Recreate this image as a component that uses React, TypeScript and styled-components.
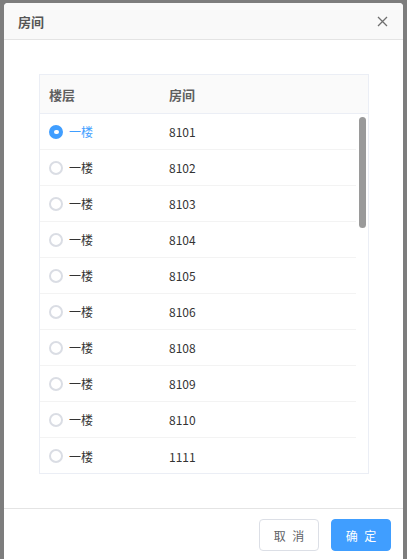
import styled, { createGlobalStyle } from "styled-components";

const rooms = ["8101", "8102", "8103", "8104", "8105", "8106", "8108", "8109", "8110", "1111"];

const GlobalStyle = createGlobalStyle`
  html, body {
    margin: 0;
    padding: 0;
    background: #7d7d7d;
    font-family: "Noto Sans CJK SC", "Noto Sans", sans-serif;
  }
`;

const App = () => {
  const selected = 0;

  return (
    <>
      <GlobalStyle />
      <S.Backdrop>
        <S.Dialog>
          <S.Header>
            <S.Title>房间</S.Title>
            <S.Close aria-label="close">
              <svg width="11" height="11" viewBox="0 0 11 11">
                <path d="M1 1 L10 10 M10 1 L1 10" stroke="#6f6f6f" strokeWidth="1.3" fill="none" />
              </svg>
            </S.Close>
          </S.Header>

          <S.Body>
            <S.Table>
              <S.HeadRow>
                <S.HeadCell>楼层</S.HeadCell>
                <S.HeadCell>房间</S.HeadCell>
              </S.HeadRow>
              <S.BodyWrap>
                <S.Rows>
                  {rooms.map((room, i) => (
                    <S.Row key={room}>
                      <S.Cell>
                        <S.Radio $checked={i === selected} />
                        <S.Floor $checked={i === selected}>一楼</S.Floor>
                      </S.Cell>
                      <S.Cell>{room}</S.Cell>
                    </S.Row>
                  ))}
                </S.Rows>
                <S.Gutter>
                  <S.Thumb />
                </S.Gutter>
              </S.BodyWrap>
            </S.Table>
          </S.Body>

          <S.Footer>
            <S.Button>取 消</S.Button>
            <S.Button $primary>确 定</S.Button>
          </S.Footer>
        </S.Dialog>
      </S.Backdrop>
    </>
  );
};

export default App;

const S = {
  Backdrop: styled.div`
    width: 407px;
    height: 559px;
    padding: 3px 4px 0 4px;
    box-sizing: border-box;
    overflow: hidden;
    background: #7d7d7d;
  `,

  Dialog: styled.div`
    width: 399px;
    height: 556px;
    background: #ffffff;
    border-radius: 4px 4px 0 0;
    display: flex;
    flex-direction: column;
    overflow: hidden;
  `,

  Header: styled.div`
    height: 36px;
    flex: 0 0 36px;
    display: flex;
    align-items: center;
    justify-content: space-between;
    padding: 0 15px 0 14px;
    background: #f9f9f9;
    border-bottom: 1px solid #e4e4e4;
  `,

  Title: styled.div`
    font-size: 13px;
    font-weight: 700;
    color: #555555;
  `,

  Close: styled.button`
    border: none;
    background: transparent;
    padding: 0;
    width: 11px;
    height: 11px;
    display: flex;
    cursor: pointer;
  `,

  Body: styled.div`
    flex: 0 0 auto;
    padding: 34px 34px 34px 35px;
    border-bottom: 1px solid #e4e4e4;
  `,

  Table: styled.div`
    border: 1px solid #ebeef5;
    height: 400px;
    box-sizing: border-box;
    display: flex;
    flex-direction: column;
  `,

  HeadRow: styled.div`
    display: grid;
    grid-template-columns: 120px 1fr;
    height: 38px;
    flex: 0 0 38px;
    background: #fafafa;
    border-bottom: 1px solid #ebeef5;
  `,

  HeadCell: styled.div`
    display: flex;
    align-items: center;
    padding-left: 9px;
    font-size: 13px;
    font-weight: 700;
    color: #5f5f5f;
  `,

  BodyWrap: styled.div`
    flex: 1;
    display: flex;
    overflow: hidden;
  `,

  Rows: styled.div`
    flex: 1;
    display: flex;
    flex-direction: column;
  `,

  Row: styled.div`
    display: grid;
    grid-template-columns: 120px 1fr;
    height: 36px;
    flex: 0 0 36px;
    box-sizing: border-box;
    border-bottom: 1px solid #f3f3f3;

    &:last-child {
      border-bottom: none;
    }
  `,

  Cell: styled.div`
    display: flex;
    align-items: center;
    padding-left: 9px;
    font-size: 12px;
    color: #333333;
  `,

  Radio: styled.span<{ $checked?: boolean }>`
    width: 14px;
    height: 14px;
    box-sizing: border-box;
    border-radius: 50%;
    margin-right: 6px;
    border: 2px solid ${(p) => (p.$checked ? "#409eff" : "#dadde4")};
    background: ${(p) => (p.$checked ? "#409eff" : "#ffffff")};
    display: flex;
    align-items: center;
    justify-content: center;

    &::after {
      content: "";
      width: 5px;
      height: 4px;
      border-radius: 2px;
      background: #ffffff;
      display: ${(p) => (p.$checked ? "block" : "none")};
    }
  `,

  Floor: styled.span<{ $checked?: boolean }>`
    color: ${(p) => (p.$checked ? "#409eff" : "#333333")};
  `,

  Gutter: styled.div`
    width: 12px;
    flex: 0 0 12px;
    padding: 3px 2px 0 3px;
    box-sizing: border-box;
  `,

  Thumb: styled.div`
    width: 7px;
    height: 111px;
    border-radius: 4px;
    background: #9a9a9a;
  `,

  Footer: styled.div`
    flex: 0 0 auto;
    display: flex;
    justify-content: flex-end;
    gap: 12px;
    padding: 10px 12px 10px 0;
  `,

  Button: styled.button<{ $primary?: boolean }>`
    width: 60px;
    height: 32px;
    border-radius: 4px;
    font-family: "Noto Sans CJK SC", sans-serif;
    font-size: 12px;
    letter-spacing: 2px;
    text-indent: 2px;
    cursor: pointer;
    border: 1px solid ${(p) => (p.$primary ? "#409eff" : "#dcdfe6")};
    background: ${(p) => (p.$primary ? "#409eff" : "#ffffff")};
    color: ${(p) => (p.$primary ? "#ffffff" : "#606266")};
  `,
};
